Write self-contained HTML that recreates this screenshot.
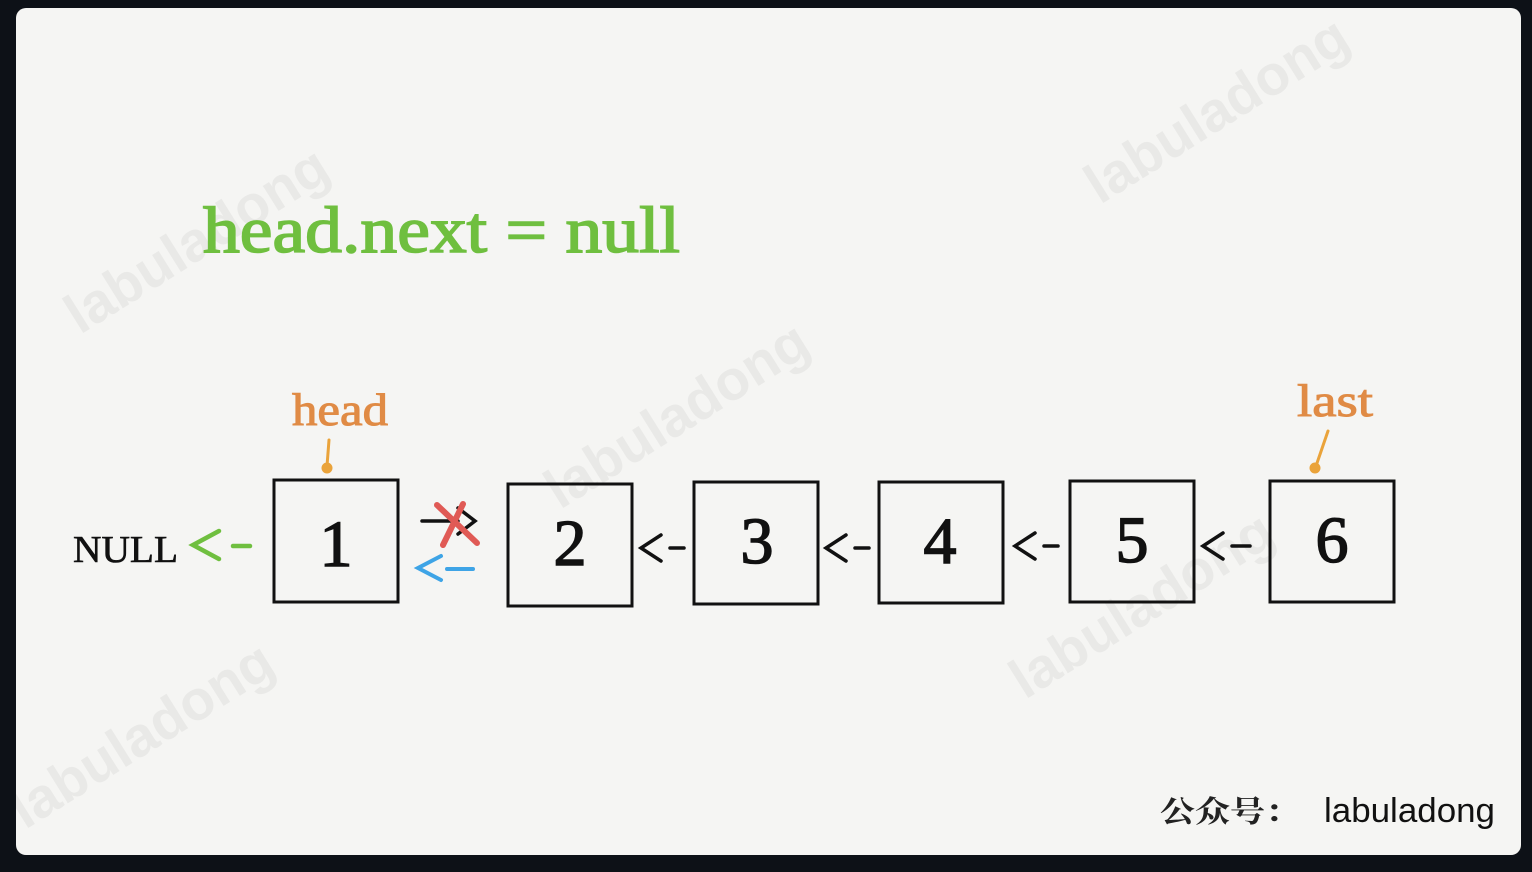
<!DOCTYPE html>
<html><head><meta charset="utf-8"><style>
html,body{margin:0;padding:0;background:#0d1117;width:1532px;height:872px;overflow:hidden}
svg{position:absolute;left:0;top:0}
</style></head><body>
<svg width="1532" height="872" viewBox="0 0 1532 872" xmlns="http://www.w3.org/2000/svg">
<defs><clipPath id="c"><rect x="16" y="8" width="1505" height="847" rx="10"/></clipPath></defs>
<rect x="16" y="8" width="1505" height="847" rx="10" fill="#f5f5f3"/>
<g clip-path="url(#c)" font-family="Liberation Sans, sans-serif" font-weight="bold" font-size="56" fill="#e9e9e7">
<text transform="translate(80,335) rotate(-32)">labuladong</text>
<text transform="translate(1100,205) rotate(-32)">labuladong</text>
<text transform="translate(560,510) rotate(-32)">labuladong</text>
<text transform="translate(1025,700) rotate(-32)">labuladong</text>
<text transform="translate(25,830) rotate(-32)">labuladong</text>
</g>
<text x="203" y="252" font-family="Liberation Serif, serif" font-size="66" fill="#6fbf3f" stroke="#6fbf3f" stroke-width="1.6" textLength="477" lengthAdjust="spacingAndGlyphs">head.next = null</text>
<text x="292" y="425" font-family="Liberation Serif, serif" font-size="46" fill="#e08b45" stroke="#e08b45" stroke-width="1" textLength="96" lengthAdjust="spacingAndGlyphs">head</text>
<text x="1297" y="416" font-family="Liberation Serif, serif" font-size="46" fill="#e08b45" stroke="#e08b45" stroke-width="1" textLength="76" lengthAdjust="spacingAndGlyphs">last</text>
<g stroke="#eaa33a" stroke-width="3" fill="#eaa33a" stroke-linecap="round">
<path d="M329 440 L327 466" fill="none"/><circle cx="327" cy="468" r="4"/>
<path d="M1328 431 L1316 466" fill="none"/><circle cx="1315" cy="468" r="4"/>
</g>
<text x="73" y="562" font-family="Liberation Serif, serif" font-size="38" fill="#111" stroke="#111" stroke-width="0.6" textLength="105" lengthAdjust="spacingAndGlyphs">NULL</text>
<g stroke="#6fbf3f" stroke-width="4.5" fill="none" stroke-linecap="round">
<path d="M219 531 L193 545 L219 559"/><path d="M233 546 L250 546"/>
</g>
<g fill="none" stroke="#111" stroke-width="3">
<rect x="274" y="480" width="124" height="122"/>
<rect x="508" y="484" width="124" height="122"/>
<rect x="694" y="482" width="124" height="122"/>
<rect x="879" y="482" width="124" height="121"/>
<rect x="1070" y="481" width="124" height="121"/>
<rect x="1270" y="481" width="124" height="121"/>
</g>
<g font-family="Liberation Serif, serif" font-size="66" fill="#111" stroke="#111" stroke-width="1.5" text-anchor="middle">
<text x="336" y="566">1</text><text x="570" y="565">2</text><text x="757" y="563">3</text>
<text x="940" y="563">4</text><text x="1132" y="562">5</text><text x="1332" y="562">6</text>
</g>
<g stroke="#111" stroke-width="3.5" fill="none" stroke-linecap="round">
<path d="M661 535 L641 548 L661 561"/><path d="M670 548 L684 548"/>
<path d="M846 535 L826 548 L846 561"/><path d="M855 548 L869 548"/>
<path d="M1035 533 L1015 546 L1035 559"/><path d="M1044 546 L1058 546"/>
<path d="M1223 533 L1203 546 L1223 559"/><path d="M1232 546 L1250 546"/>
<path d="M422 521 L458 521"/><path d="M458 508 L475 521 L458 534"/>
</g>
<g stroke="#e05a55" stroke-width="6" fill="none" stroke-linecap="round">
<path d="M437 505 L477 543"/><path d="M463 504 L443 545"/>
</g>
<g stroke="#3ea4e6" stroke-width="4" fill="none" stroke-linecap="round">
<path d="M441 556 L418 568 L441 580"/><path d="M447 569 L473 569"/>
</g>
<text x="1160" y="822" font-family="Noto Serif CJK SC, serif" font-weight="bold" font-size="30" fill="#222" textLength="140" lengthAdjust="spacingAndGlyphs">公众号：</text>
<text x="1324" y="822" font-family="Liberation Sans, sans-serif" font-size="34" fill="#111" textLength="171" lengthAdjust="spacingAndGlyphs">labuladong</text>
</svg>
</body></html>
